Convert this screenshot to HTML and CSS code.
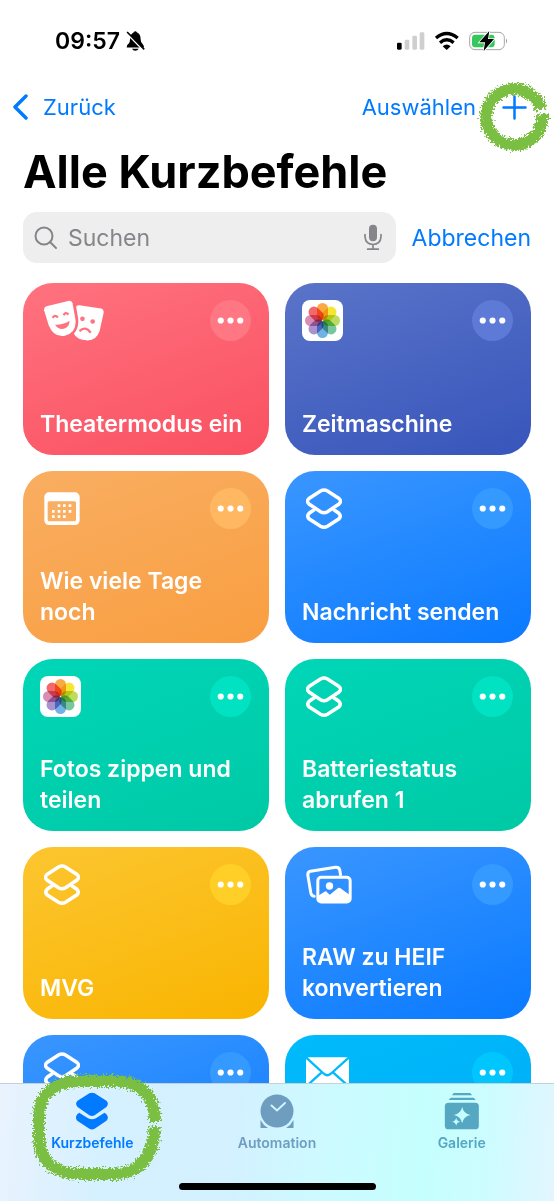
FILE: index.html
```html
<!DOCTYPE html>
<html lang="de">
<head>
  <meta charset="UTF-8">
  <meta name="viewport" content="width=device-width, initial-scale=1.0">
  <title>Alle Kurzbefehle</title>
  <link rel="stylesheet" href="styles.css">
</head>
<body>
  <!-- shared icons -->
  <svg class="defs" aria-hidden="true">
    <filter id="brush" x="-20%" y="-20%" width="140%" height="140%">
      <feTurbulence type="fractalNoise" baseFrequency="0.55" numOctaves="2" seed="4" />
      <feDisplacementMap in="SourceGraphic" scale="10" xChannelSelector="R" yChannelSelector="G" />
    </filter>
    <symbol id="shortcut" viewBox="0 0 36 41">
      <path class="line" d="M14.5 3Q18 1 21.5 3L33 10.5Q36 13.2 33 16L21.5 23.7Q18 25.7 14.5 23.7L3 16Q0 13.2 3 10.5Z M8.5 21.5L3.2 25.2Q.5 28 3 30.8L14.5 38.2Q18 40.2 21.5 38.2L33 30.8Q35.5 28 32.8 25.2L27.5 21.5" />
    </symbol>
    <symbol id="dots" viewBox="0 0 40 40">
      <circle cx="10.500" cy="20" r="3" /><circle cx="20" cy="20" r="3" /><circle cx="29.500" cy="20" r="3" />
    </symbol>
    <symbol id="photos" viewBox="0 0 41 41">
      <rect width="41" height="41" rx="8" fill="#fff" />
      <g class="petals" transform="translate(20.500 20.500)">
        <rect x="-5.500" y="-17.500" width="11" height="17" rx="5.500" fill="#faa12f" />
        <rect x="-5.500" y="-17.500" width="11" height="17" rx="5.500" fill="#f5e41c" transform="rotate(45)" />
        <rect x="-5.500" y="-17.500" width="11" height="17" rx="5.500" fill="#b5d84f" transform="rotate(90)" />
        <rect x="-5.500" y="-17.500" width="11" height="17" rx="5.500" fill="#68c092" transform="rotate(135)" />
        <rect x="-5.500" y="-17.500" width="11" height="17" rx="5.500" fill="#60a9e4" transform="rotate(180)" />
        <rect x="-5.500" y="-17.500" width="11" height="17" rx="5.500" fill="#a186c9" transform="rotate(225)" />
        <rect x="-5.500" y="-17.500" width="11" height="17" rx="5.500" fill="#d580ae" transform="rotate(270)" />
        <rect x="-5.500" y="-17.500" width="11" height="17" rx="5.500" fill="#f2585a" transform="rotate(315)" />
      </g>
    </symbol>
  </svg>

  <header>
    <div class="status">
      <span class="time">09:57</span>
      <svg class="bell" viewBox="379 94 58 62">
        <path d="M381 145Q380 138 387 133Q391 128 391 120Q392 103 402 99Q407 91 413 99Q424 104 424 120Q424 129 430 134Q435 139 434 145Z M397 149H418Q415 155 407 155Q400 155 397 149Z" />
        <path class="cut" d="M379 99L434 155" />
        <path class="slash" d="M382 97L435 151" />
      </svg>
      <svg class="signals" viewBox="142 94 333 60">
        <rect x="142" y="129" width="14" height="21" rx="4" />
        <g fill="#cfcfcf">
          <rect x="165" y="120" width="14" height="30" rx="4" />
          <rect x="188" y="108" width="14" height="42" rx="4" />
          <rect x="210" y="98" width="14" height="52" rx="4" />
        </g>
        <path d="M259 115Q291 88 324 115M271 129Q291 112 312 129" fill="none" stroke="#000" stroke-width="10" />
        <path d="M279 140Q291 129 303 140L291 151Z" />
        <rect x="360" y="98" width="104" height="52" rx="16" fill="none" stroke="#a5a5a5" stroke-width="3" />
        <path d="M469 116Q476 124 469 132Z" fill="#a5a5a5" />
        <rect x="367" y="105" width="68" height="38" rx="10" fill="#34c759" />
        <path d="M419 94L389 128H406L402 154L433 118H415Z" stroke="#fff" stroke-width="5" paint-order="stroke" />
      </svg>
    </div>

    <nav class="navbar">
      <a class="back" href="#">
        <svg viewBox="0 0 16 26"><path d="M14 2L3 13L14 24" /></svg>
        Zurück
      </a>
      <div class="actions">
        <button class="select">Auswählen</button>
        <button class="add" aria-label="Neuer Kurzbefehl">
          <svg class="plus" viewBox="0 0 25 25"><path d="M12.500 1.500V23.500M1.500 12.500H23.500" /></svg>
          <svg class="ring small" viewBox="0 0 70 70">
            <path d="M62 31A28 28 0 1 0 63 36" />
          </svg>
        </button>
      </div>
    </nav>

    <h1>Alle Kurzbefehle</h1>

    <form class="search">
      <label class="field">
        <svg class="glass" viewBox="0 0 24 24"><circle cx="10" cy="10" r="8.500" /><path d="M16 16L22 22" /></svg>
        <input type="text" placeholder="Suchen" aria-label="Suchen">
        <svg class="mic" viewBox="264 74 54 80">
          <rect x="279" y="76" width="24" height="49" rx="12" />
          <path d="M267 105V112Q269 134 291 135Q313 134 315 112V105M291 135V149M275 149H307" />
        </svg>
      </label>
      <button type="reset">Abbrechen</button>
    </form>
  </header>

  <main>
    <article class="card red">
      <svg class="icon masks" viewBox="72 66 181 124">
        <path d="M72 97Q71 88 79 85L148 68Q156 67 158 76L167 125Q171 165 135 174Q101 180 86 142Z" />
        <path d="M169 87Q170 81 178 82L245 92Q254 95 252 105L240 160Q230 190 200 188Q172 186 162 168Q178 152 175 122Z" />
        <path class="hole" d="M105 140Q128 143 149 129Q149 149 131 153Q114 156 105 140Z" />
        <path class="hole-line" d="M98 120Q104 109 114 119M131 112Q137 101 146 110M179 160Q197 143 213 165" />
        <circle class="hole" cx="188" cy="123" r="7" />
        <circle class="hole" cx="219" cy="131" r="7" />
      </svg>
      <button class="more" aria-label="Mehr"><svg><use href="#dots" /></svg></button>
      <h2>Theatermodus ein</h2>
    </article>

    <article class="card indigo">
      <svg class="icon app"><use href="#photos" /></svg>
      <button class="more" aria-label="Mehr"><svg><use href="#dots" /></svg></button>
      <h2>Zeitmaschine</h2>
    </article>

    <article class="card orange">
      <svg class="icon calendar" viewBox="71 56 108 123">
        <rect x="72" y="69" width="106" height="98" rx="14" />
        <rect class="hole" x="82" y="96" width="85" height="60" rx="5" />
        <path d="M112 105h8v8h-8zM128 105h8v8h-8zM145 105h8v8h-8zM95 122h8v8h-8zM112 122h8v8h-8zM128 122h8v8h-8zM145 122h8v8h-8zM95 138h8v8h-8zM112 138h8v8h-8zM128 138h8v8h-8z" />
      </svg>
      <button class="more" aria-label="Mehr"><svg><use href="#dots" /></svg></button>
      <h2>Wie viele Tage noch</h2>
    </article>

    <article class="card blue">
      <svg class="icon glyph"><use href="#shortcut" /></svg>
      <button class="more" aria-label="Mehr"><svg><use href="#dots" /></svg></button>
      <h2>Nachricht senden</h2>
    </article>

    <article class="card teal">
      <svg class="icon app"><use href="#photos" /></svg>
      <button class="more" aria-label="Mehr"><svg><use href="#dots" /></svg></button>
      <h2>Fotos zippen und teilen</h2>
    </article>

    <article class="card teal">
      <svg class="icon glyph"><use href="#shortcut" /></svg>
      <button class="more" aria-label="Mehr"><svg><use href="#dots" /></svg></button>
      <h2>Batteriestatus abrufen 1</h2>
    </article>

    <article class="card yellow">
      <svg class="icon glyph"><use href="#shortcut" /></svg>
      <button class="more" aria-label="Mehr"><svg><use href="#dots" /></svg></button>
      <h2>MVG</h2>
    </article>

    <article class="card blue">
      <svg class="icon pictures" viewBox="77 72 137 123">
        <path class="line" d="M101 169Q93 168 91 159L82 106Q81 96 90 94L165 82Q176 81 178 91L180 104" />
        <rect class="line" x="112" y="112" width="97" height="74" rx="10" />
        <circle cx="147" cy="138" r="11" />
        <path d="M112 168L132 155Q137 152 141 158L148 164L170 146Q176 141 182 146L209 166V186H112Z" />
      </svg>
      <button class="more" aria-label="Mehr"><svg><use href="#dots" /></svg></button>
      <h2>RAW zu HEIF konvertieren</h2>
    </article>

    <article class="card blue">
      <svg class="icon glyph"><use href="#shortcut" /></svg>
      <button class="more" aria-label="Mehr"><svg><use href="#dots" /></svg></button>
    </article>

    <article class="card cyan">
      <svg class="icon mail" viewBox="0 -14 129 123">
        <rect y="2" width="129" height="94" rx="7" />
        <path class="hole-line" d="M0 2L51 49Q64 62 77 49L129 2M0 90L47 47M129 90L81 47" />
      </svg>
      <button class="more" aria-label="Mehr"><svg><use href="#dots" /></svg></button>
    </article>
  </main>

  <footer>
    <nav class="tabs">
      <a class="tab active" href="#">
        <svg viewBox="222 208 108 122">
          <path d="M268 215Q276 211 284 215L320 238Q329 247 320 257L284 282Q276 287 268 282L232 257Q223 247 232 238Z" />
          <path d="M237 274L231 279Q223 289 231 299L268 323Q276 328 284 323L320 299Q329 289 320 279L314 274L288 291Q276 298 264 291Z" />
        </svg>
        Kurzbefehle
        <svg class="ring large" viewBox="0 0 130 108">
          <path d="M123 49V44Q119 9 84 8H50Q8 8 7 44V66Q9 100 48 101H82Q120 100 123 54" />
        </svg>
      </a>
      <a class="tab automation" href="#">
        <svg viewBox="-3 -3 40 40">
          <circle cx="17" cy="17" r="16.500" />
          <path d="M.5 26Q3 31 8 34H.5ZM33.500 26Q31 31 26 34H33.500Z" />
          <path class="hand" d="M11.500 11.500L17 16.500L25 9" />
        </svg>
        Automation
      </a>
      <a class="tab gallery" href="#">
        <svg viewBox="493 209 119 120">
          <path d="M528 215H577L583 222H522ZM519 229H587L594 236H512Z" />
          <rect x="501" y="244" width="102" height="80" rx="11" />
          <path class="star" d="M553 257Q557 277 578 281Q557 285 553 306Q549 285 528 281Q549 277 553 257ZM535 289Q537 299 547 301Q537 303 535 313Q533 303 523 301Q533 299 535 289Z" />
        </svg>
        Galerie
      </a>
    </nav>
    <div class="home"></div>
  </footer>
</body>
</html>
```

FILE: styles.css
```css
:root {
  --blue: #007aff;
  --gray: #85858a;
  --green: #7abf43;
}

* {
  box-sizing: border-box;
}

body {
  margin: 0;
  height: 100vh;
  display: flex;
  flex-direction: column;
  overflow: hidden;
  background: #fff;
  color: #000;
  font-family: Inter, "Liberation Sans", sans-serif;
  font-size: 23px;
}

svg {
  display: block;
  flex: none;
}

.defs {
  position: absolute;
  width: 0;
  height: 0;
}

button {
  padding: 0;
  border: 0;
  background: none;
  color: var(--blue);
  font: inherit;
  cursor: pointer;
}

a {
  color: var(--blue);
  text-decoration: none;
}

/* Header */

header {
  padding-bottom: 20px;
}

.status {
  display: flex;
  align-items: center;
  height: 82px;
  padding: 0 46px 0 55px;
}

.time {
  font-weight: 600;
}

.bell {
  width: 19px;
  height: 20px;
  margin-left: 6px;
}

.bell .cut {
  stroke: #fff;
  stroke-width: 6;
}

.bell .slash {
  stroke: #000;
  stroke-width: 5;
}

.signals {
  width: 111px;
  height: 20px;
  margin-left: auto;
}

.navbar {
  display: flex;
  align-items: center;
  justify-content: space-between;
  height: 50px;
  padding: 0 27px 0 12px;
  font-size: 22px;
}

.back {
  display: flex;
  align-items: center;
  gap: 15px;
}

.back svg {
  width: 16px;
  height: 26px;
  fill: none;
  stroke: var(--blue);
  stroke-width: 3.5;
  stroke-linecap: round;
  stroke-linejoin: round;
}

.actions {
  display: flex;
  align-items: center;
  gap: 26px;
}

.add {
  position: relative;
}

.plus {
  width: 25px;
  height: 25px;
  stroke: var(--blue);
  stroke-width: 2.5;
  stroke-linecap: round;
}

.ring {
  position: absolute;
  overflow: visible;
  fill: none;
  stroke: var(--green);
  stroke-width: 12;
  filter: url(#brush);
  pointer-events: none;
}

.ring.small {
  width: 70px;
  height: 70px;
  left: -23px;
  top: -17px;
}

.ring.large {
  width: 130px;
  height: 108px;
  left: 50%;
  top: -18px;
  margin-left: -60px;
}

h1 {
  margin: 12px 23px;
  font-size: 45px;
  line-height: 56px;
  font-weight: 700;
}

.search {
  display: flex;
  align-items: center;
  gap: 16px;
  padding: 0 23px;
}

.field {
  display: flex;
  flex: 1;
  align-items: center;
  gap: 10px;
  min-width: 0;
  height: 51px;
  padding: 0 14px 0 11px;
  border-radius: 14px;
  background: #eee;
}

.field input {
  flex: 1;
  min-width: 0;
  padding: 0;
  border: 0;
  outline: 0;
  background: none;
  font: inherit;
}

.field input::placeholder {
  color: var(--gray);
}

.glass {
  width: 24px;
  height: 24px;
  fill: none;
  stroke: var(--gray);
  stroke-width: 2;
  stroke-linecap: round;
}

.mic {
  width: 18px;
  height: 27px;
  fill: var(--gray);
}

.mic path {
  fill: none;
  stroke: var(--gray);
  stroke-width: 5;
  stroke-linecap: round;
}

/* Cards */

main {
  flex: 1;
  min-height: 0;
  overflow-y: auto;
  scrollbar-width: none;
  display: grid;
  grid-template-columns: 1fr 1fr;
  grid-auto-rows: min-content;
  gap: 16px;
  padding: 0 23px;
}

.card {
  display: grid;
  grid-template-columns: 1fr auto;
  align-content: space-between;
  min-height: 172px;
  padding: 17px 18px 15px 17px;
  border-radius: 30px;
  background: linear-gradient(160deg, var(--from), var(--to));
  color: #fff;
}

.red { --from: #ff727f; --to: #fa5061; --more: #ff7783; }
.indigo { --from: #5a74c9; --to: #3755bb; --more: #5d7bd6; }
.orange { --from: #f9ae61; --to: #f99e41; --more: #ffb861; }
.blue { --from: #3a96ff; --to: #0a7aff; --more: #359aff; }
.teal { --from: #00d6b8; --to: #00c9a5; --more: #00e2c2; }
.yellow { --from: #fcc630; --to: #f9b400; --more: #ffcf27; }
.cyan { --from: #00bbfb; --to: #00a9f6; --more: #00c6ff; }

.card h2 {
  grid-column: 1 / -1;
  margin: 0;
  font-size: 23px;
  line-height: 31px;
  font-weight: 600;
}

.icon {
  height: 41px;
  margin-left: 4px;
  fill: #fff;
}

.icon .hole {
  fill: var(--from);
}

.icon .hole-line {
  fill: none;
  stroke: var(--from);
  stroke-width: 7;
}

.line {
  fill: none;
  stroke: #fff;
  stroke-width: 9;
  stroke-linecap: round;
}

#shortcut .line {
  stroke-width: 3.5;
  stroke-linecap: butt;
}

.petals rect {
  mix-blend-mode: multiply;
  opacity: 0.9;
}

.app {
  width: 41px;
  margin-left: 0;
}

.glyph,
.calendar {
  width: 36px;
}

.masks {
  width: 60px;
}

.pictures {
  width: 46px;
}

.mail {
  width: 43px;
}

.more {
  width: 41px;
  height: 41px;
  border-radius: 50%;
  background: var(--more);
}

.more svg {
  width: 41px;
  height: 41px;
  fill: #fff;
}

/* Tab bar */

footer {
  position: relative;
  padding: 7px 0 11px;
  border-top: 1px solid #c3d0d6;
  background: linear-gradient(95deg, #e9f3fe 0%, #d5f0ff 20%, #d3f1ff 42%, #ccfbff 60%, #c5fffe 76%, #cdfcff 88%, #e3f5ff 100%);
}

.tabs {
  display: flex;
}

.tab {
  position: relative;
  display: flex;
  flex: 1;
  flex-direction: column;
  align-items: center;
  gap: 2px;
  color: var(--tint);
  fill: var(--tint);
  font-size: 14px;
  line-height: 20px;
  font-weight: 600;
}

.active { --tint: #007aff; }
.automation { --tint: #6f9dc0; }
.gallery { --tint: #55a7c2; }

.tab > svg:first-child {
  width: 40px;
  height: 40px;
}

.tab .ring {
  fill: none;
}

.hand {
  fill: none;
  stroke: #d3f4ff;
  stroke-width: 2;
  stroke-linecap: round;
}

.star {
  fill: #c5fdff;
}

.home {
  width: 197px;
  height: 7px;
  margin: 30px auto 0;
  border-radius: 4px;
  background: #000;
}
```
